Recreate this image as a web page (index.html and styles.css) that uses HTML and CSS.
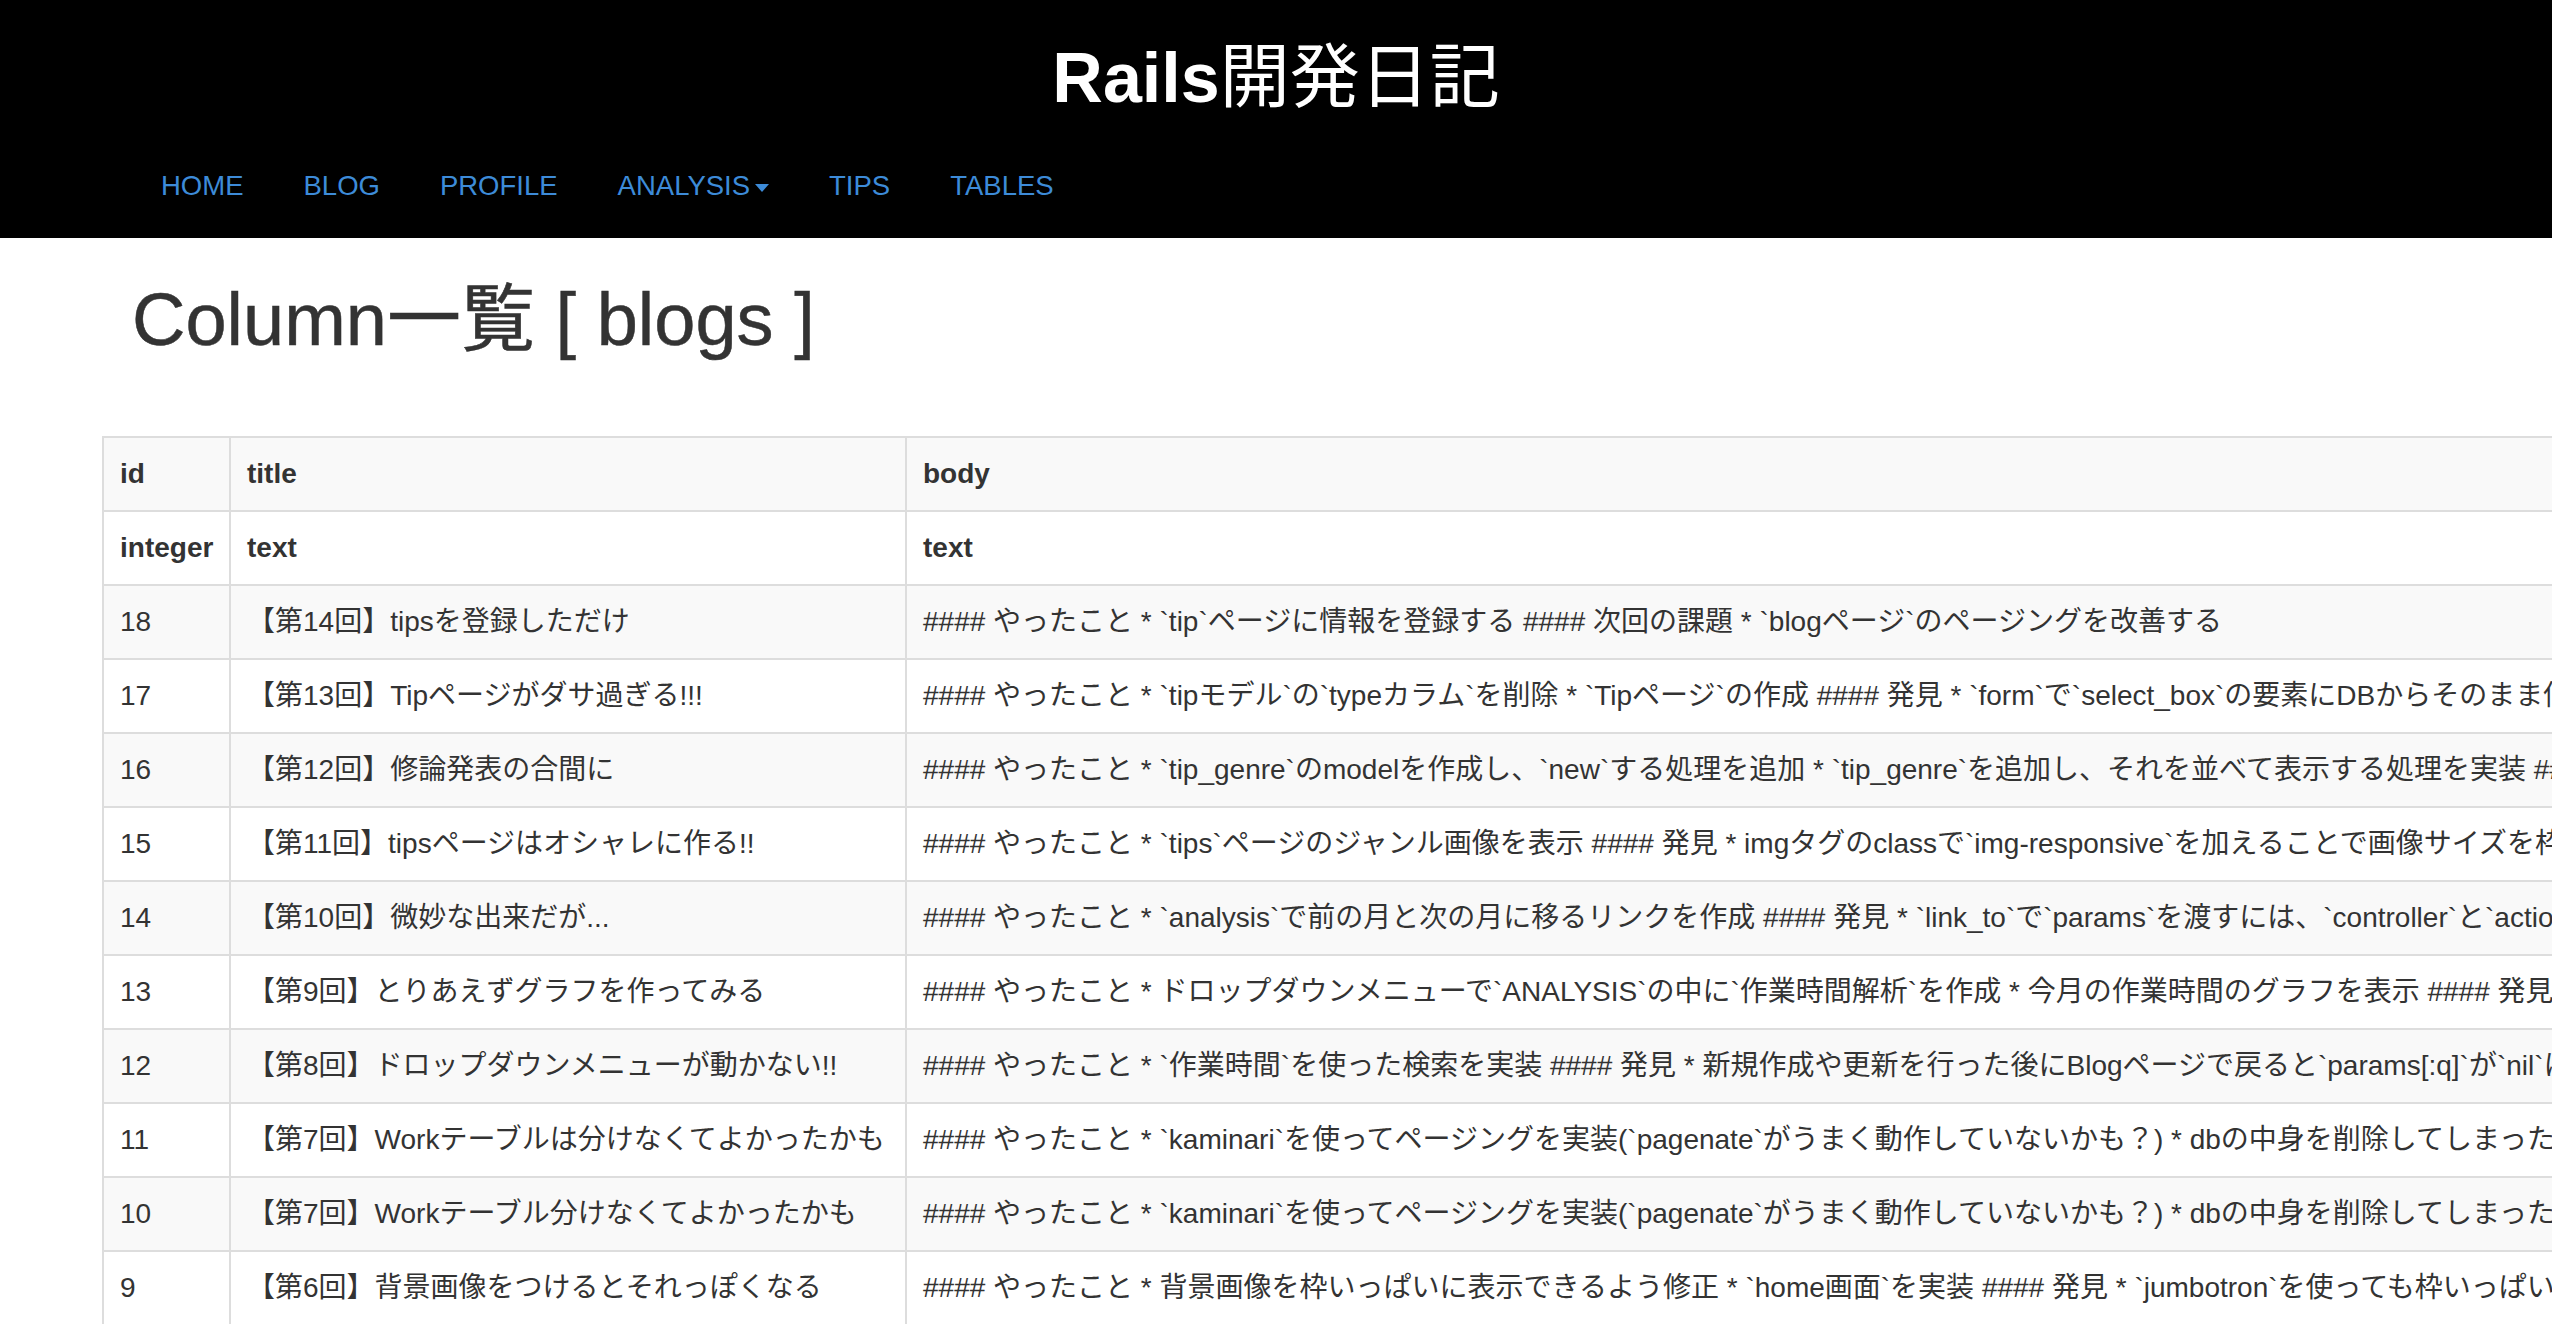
FILE: index.html
```html
<!DOCTYPE html>
<html lang="ja">
<head>
<meta charset="utf-8">
<title>Rails開発日記</title>
<link rel="stylesheet" href="styles.css">
</head>
<body>
<header class="site-header">
  <h1 class="brand"><span class="brand-en">Rails</span>開発日記</h1>
  <nav class="main-nav">
    <ul class="nav-list">
      <li><a href="#">HOME</a></li>
      <li><a href="#">BLOG</a></li>
      <li><a href="#">PROFILE</a></li>
      <li><a href="#">ANALYSIS<span class="caret"></span></a></li>
      <li><a href="#">TIPS</a></li>
      <li><a href="#">TABLES</a></li>
    </ul>
  </nav>
</header>
<main class="content">
  <h2 class="page-title">Column一覧 [ blogs ]</h2>
  <table class="columns-table">
    <colgroup>
      <col class="col-id">
      <col class="col-title">
      <col class="col-body">
    </colgroup>
    <thead>
      <tr class="row-names"><th>id</th><th>title</th><th>body</th></tr>
      <tr class="row-types"><th>integer</th><th>text</th><th>text</th></tr>
    </thead>
    <tbody>
      <tr><td>18</td><td>【第14回】tipsを登録しただけ</td><td>#### やったこと * `tip`ページに情報を登録する #### 次回の課題 * `blogページ`のページングを改善する</td></tr>
      <tr><td>17</td><td>【第13回】Tipページがダサ過ぎる!!!</td><td>#### やったこと * `tipモデル`の`typeカラム`を削除 * `Tipページ`の作成 #### 発見 * `form`で`select_box`の要素にDBからそのまま値を入れることができる</td></tr>
      <tr><td>16</td><td>【第12回】修論発表の合間に</td><td>#### やったこと * `tip_genre`のmodelを作成し、`new`する処理を追加 * `tip_genre`を追加し、それを並べて表示する処理を実装 #### 発見 * 特になし</td></tr>
      <tr><td>15</td><td>【第11回】tipsページはオシャレに作る!!</td><td>#### やったこと * `tips`ページのジャンル画像を表示 #### 発見 * imgタグのclassで`img-responsive`を加えることで画像サイズを枠に合わせることができる</td></tr>
      <tr><td>14</td><td>【第10回】微妙な出来だが...</td><td>#### やったこと * `analysis`で前の月と次の月に移るリンクを作成 #### 発見 * `link_to`で`params`を渡すには、`controller`と`action`を指定する必要がある</td></tr>
      <tr><td>13</td><td>【第9回】とりあえずグラフを作ってみる</td><td>#### やったこと * ドロップダウンメニューで`ANALYSIS`の中に`作業時間解析`を作成 * 今月の作業時間のグラフを表示 #### 発見 * `chartkick`を使うと簡単にグラフが書ける</td></tr>
      <tr><td>12</td><td>【第8回】ドロップダウンメニューが動かない!!</td><td>#### やったこと * `作業時間`を使った検索を実装 #### 発見 * 新規作成や更新を行った後にBlogページで戻ると`params[:q]`が`nil`になる</td></tr>
      <tr><td>11</td><td>【第7回】Workテーブルは分けなくてよかったかも</td><td>#### やったこと * `kaminari`を使ってページングを実装(`pagenate`がうまく動作していないかも？) * dbの中身を削除してしまったので作り直した</td></tr>
      <tr><td>10</td><td>【第7回】Workテーブル分けなくてよかったかも</td><td>#### やったこと * `kaminari`を使ってページングを実装(`pagenate`がうまく動作していないかも？) * dbの中身を削除してしまったので作り直した</td></tr>
      <tr><td>9</td><td>【第6回】背景画像をつけるとそれっぽくなる</td><td>#### やったこと * 背景画像を枠いっぱいに表示できるよう修正 * `home画面`を実装 #### 発見 * `jumbotron`を使っても枠いっぱいにはならない</td></tr>
    </tbody>
  </table>
</main>
</body>
</html>
```

FILE: styles.css
```css
html {
  overflow: hidden;
}

body {
  margin: 0;
  background: #fff;
  color: #333;
  font-family: "Liberation Sans", Arial, "Noto Sans CJK JP", sans-serif;
  font-size: 28px;
  line-height: 40px;
}

.site-header {
  background: #000;
  padding: 40px 0 32px;
}

.brand {
  margin: 0;
  text-align: center;
  color: #fff;
  font-size: 70px;
  line-height: 77px;
  font-weight: normal;
}

.brand-en {
  font-weight: bold;
}

.main-nav {
  margin-top: 49px;
}

.nav-list {
  display: flex;
  list-style: none;
  margin: 0;
  padding: 0 0 0 131px;
}

.nav-list a {
  display: block;
  padding: 0 30px;
  color: #3d8bd8;
  text-decoration: none;
  font-size: 27.5px;
  line-height: 40px;
}

.caret {
  display: inline-block;
  width: 0;
  height: 0;
  margin-left: 5px;
  vertical-align: middle;
  border-top: 8px solid #3d8bd8;
  border-left: 7px solid transparent;
  border-right: 7px solid transparent;
}

.content {
  padding-left: 102px;
}

.page-title {
  margin: 42px 0 0;
  padding-left: 30px;
  font-size: 74px;
  line-height: 79px;
  font-weight: normal;
  color: #333;
  -webkit-text-stroke: 0.5px #333;
}

.columns-table {
  margin-top: 77px;
  border-collapse: collapse;
  table-layout: fixed;
  width: 6000px;
}

.col-id {
  width: 127px;
}

.col-title {
  width: 676px;
}

.columns-table th,
.columns-table td {
  border: 2px solid #ddd;
  padding: 16px;
  text-align: left;
  vertical-align: top;
  white-space: nowrap;
  overflow: hidden;
  line-height: 40px;
}

.columns-table th {
  font-weight: bold;
}

.row-names {
  background: #f9f9f9;
}

.columns-table tbody tr:nth-child(odd) {
  background: #f9f9f9;
}
```
